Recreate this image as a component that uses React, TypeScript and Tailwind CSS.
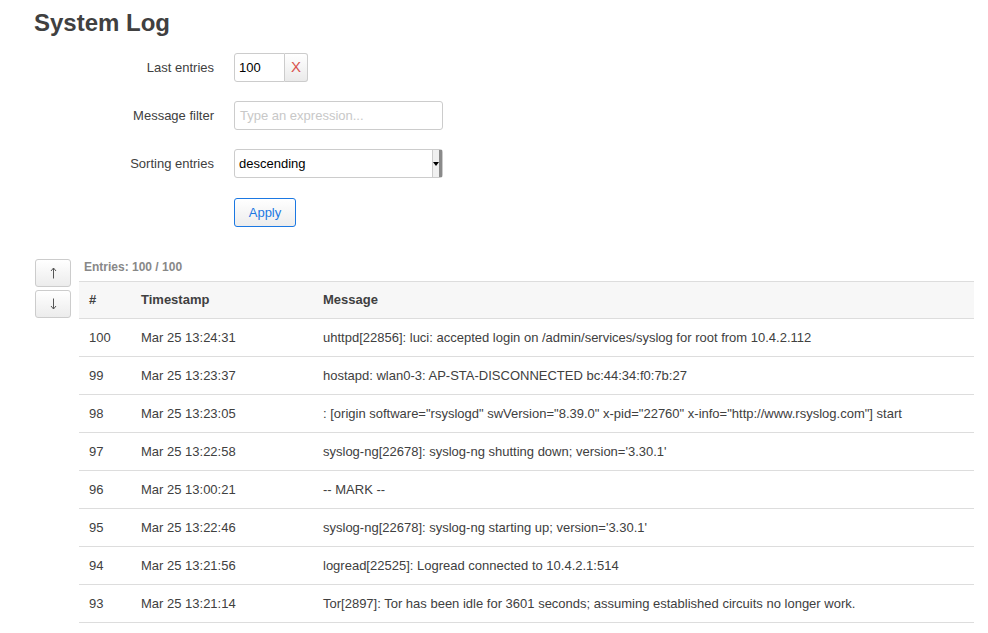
import React from "react";

const rows: [string, string, string][] = [
  ["100", "Mar 25 13:24:31", "uhttpd[22856]: luci: accepted login on /admin/services/syslog for root from 10.4.2.112"],
  ["99", "Mar 25 13:23:37", "hostapd: wlan0-3: AP-STA-DISCONNECTED bc:44:34:f0:7b:27"],
  ["98", "Mar 25 13:23:05", ': [origin software="rsyslogd" swVersion="8.39.0" x-pid="22760" x-info="http://www.rsyslog.com"] start'],
  ["97", "Mar 25 13:22:58", "syslog-ng[22678]: syslog-ng shutting down; version='3.30.1'"],
  ["96", "Mar 25 13:00:21", "-- MARK --"],
  ["95", "Mar 25 13:22:46", "syslog-ng[22678]: syslog-ng starting up; version='3.30.1'"],
  ["94", "Mar 25 13:21:56", "logread[22525]: Logread connected to 10.4.2.1:514"],
  ["93", "Mar 25 13:21:14", "Tor[2897]: Tor has been idle for 3601 seconds; assuming established circuits no longer work."],
];

export default function App() {
  return (
    <div className="w-[988px] h-[633px] overflow-hidden bg-white text-[#404040] text-[13px]" style={{ fontFamily: '"Liberation Sans", Arial, sans-serif' }}>
      <div className="pl-[34px] pt-[9px]">
        <h2 className="text-[24px] font-bold leading-[28px] text-[#404040]">System Log</h2>
      </div>
      <div className="mt-[16px] flex flex-col gap-[19px]">
        <div className="flex items-center h-[29px]">
          <div className="w-[214px] text-right pr-0">Last entries</div>
          <div className="ml-[20px] flex h-[29px]">
            <div className="w-[51px] h-[29px] border border-[#ccc] rounded-l-[3px] bg-white flex items-center pl-[4px] text-black text-[13px]">100</div>
            <div className="w-[23px] h-[29px] border border-l-0 border-[#ccc] rounded-r-[3px] bg-gradient-to-b from-white to-[#eaeaea] flex items-center justify-center text-[#d9534f] text-[15px]">X</div>
          </div>
        </div>
        <div className="flex items-center h-[29px]">
          <div className="w-[214px] text-right">Message filter</div>
          <div className="ml-[20px] w-[209px] h-[29px] border border-[#ccc] rounded-[3px] bg-white flex items-center pl-[5px] text-[#c8c8c8] text-[13px]">Type an expression...</div>
        </div>
        <div className="flex items-center h-[29px]">
          <div className="w-[214px] text-right">Sorting entries</div>
          <div className="ml-[20px] w-[209px] h-[29px] border border-[#ccc] rounded-[3px] bg-white flex items-center pl-[4px] text-black text-[13px] relative">
            <span className="flex-1">descending</span>
            <div className="w-[10px] h-[27px] bg-[#f0f0f0] border-l border-[#ccc] border-r-[3px] border-r-[#8a8a8a] flex items-center justify-center">
              <svg width="6" height="4" viewBox="0 0 6 4"><path d="M0 0H6L3 4Z" fill="#000" /></svg>
            </div>
          </div>
        </div>
        <div className="flex items-center h-[29px] mt-[1px]">
          <div className="w-[214px]" />
          <div className="ml-[20px] w-[62px] h-[29px] border border-[#1b78e2] rounded-[3px] bg-gradient-to-b from-white to-[#ededed] flex items-center justify-center text-[#1b78e2] text-[13px]">Apply</div>
        </div>
      </div>
      <div className="mt-[32px] flex">
        <div className="ml-[35px] w-[36px] flex flex-col gap-[3px]">
          <div className="h-[28px] border border-[#ccc] rounded-[3px] bg-gradient-to-b from-white to-[#ececec] flex items-center justify-center text-[#404040]">
            <svg width="7" height="12" viewBox="0 0 7 12"><path d="M3.5 1V11.5M1 4L3.5 1L6 4" stroke="#555" strokeWidth="1" fill="none" /></svg>
          </div>
          <div className="h-[28px] border border-[#ccc] rounded-[3px] bg-gradient-to-b from-white to-[#ececec] flex items-center justify-center text-[#404040]">
            <svg width="7" height="12" viewBox="0 0 7 12"><path d="M3.5 0.5V11M1 8L3.5 11L6 8" stroke="#555" strokeWidth="1" fill="none" /></svg>
          </div>
        </div>
        <div className="ml-[8px] w-[895px]">
          <div className="h-[22px] pl-[5px] text-[12px] font-bold text-[#888] leading-[14px] pt-[1px]">Entries: 100 / 100</div>
          <div className="border-t border-b border-[#ddd] bg-[#f7f7f7] h-[38px] flex items-center font-bold">
            <div className="w-[62px] pl-[10px]">#</div>
            <div className="w-[182px]">Timestamp</div>
            <div className="flex-1">Message</div>
          </div>
          {rows.map((r) => (
            <div key={r[0]} className="h-[38px] flex items-center border-b border-[#ddd] pt-[1px]">
              <div className="w-[62px] pl-[10px]">{r[0]}</div>
              <div className="w-[182px]">{r[1]}</div>
              <div className="flex-1 whitespace-nowrap">{r[2]}</div>
            </div>
          ))}
        </div>
      </div>
    </div>
  );
}
